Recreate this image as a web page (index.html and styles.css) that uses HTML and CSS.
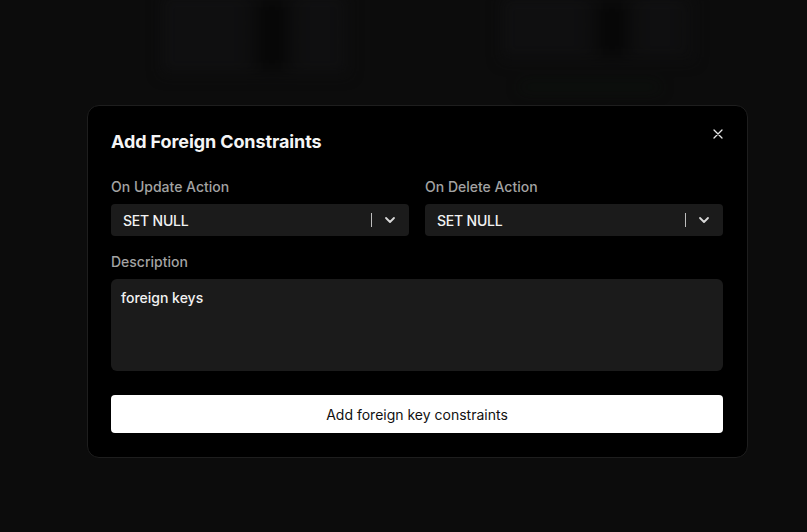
FILE: index.html
```html
<!DOCTYPE html>
<html>
<head>
<meta charset="utf-8">
<link rel="stylesheet" href="styles.css">
</head>
<body>
<div class="backdrop">
  <div class="ghost ghost-a">
    <div class="gcol"><div class="gline"></div><div class="gline"></div><div class="gline"></div><div class="gline"></div></div>
    <div class="gdark"></div>
    <div class="gcol narrow"><div class="gline"></div><div class="gline"></div><div class="gline"></div><div class="gline"></div></div>
  </div>
  <div class="ghost ghost-b">
    <div class="gcol"><div class="gline"></div><div class="gline"></div><div class="gline"></div></div>
    <div class="gdark"></div>
    <div class="gcol narrow"><div class="gline"></div><div class="gline"></div><div class="gline"></div></div>
    <div class="gbar"></div>
  </div>
</div>

<div class="modal">
  <button class="close" aria-label="Close">
    <svg width="12" height="12" viewBox="0 0 12 12"><path d="M2 2L10 10M10 2L2 10" stroke="#e6e6e6" stroke-width="1.3" stroke-linecap="round"/></svg>
  </button>
  <h2 class="title">Add Foreign Constraints</h2>
  <div class="row">
    <div class="field">
      <label class="label">On Update Action</label>
      <div class="select">
        <span class="value">SET NULL</span>
        <span class="sep"></span>
        <svg class="chev" width="14" height="14" viewBox="0 0 14 14"><path d="M3 5L7 9L11 5" fill="none" stroke="#d9d9d9" stroke-width="1.8" stroke-linecap="round" stroke-linejoin="round"/></svg>
      </div>
    </div>
    <div class="field">
      <label class="label">On Delete Action</label>
      <div class="select">
        <span class="value">SET NULL</span>
        <span class="sep"></span>
        <svg class="chev" width="14" height="14" viewBox="0 0 14 14"><path d="M3 5L7 9L11 5" fill="none" stroke="#d9d9d9" stroke-width="1.8" stroke-linecap="round" stroke-linejoin="round"/></svg>
      </div>
    </div>
  </div>
  <div class="field desc">
    <label class="label">Description</label>
    <div class="textarea">foreign keys</div>
  </div>
  <button class="submit">Add foreign key constraints</button>
</div>
</body>
</html>
```
FILE: styles.css
```css
* { box-sizing: border-box; }
html, body {
  margin: 0;
  height: 100%;
}
body {
  background: #0c0c0c;
  font-family: "Inter", "Liberation Sans", sans-serif;
  color: #ededed;
  overflow: hidden;
}
.backdrop {
  display: flex;
  gap: 150px;
  padding-left: 160px;
  filter: blur(7px);
  opacity: 0.6;
}
.ghost {
  display: flex;
  gap: 14px;
  width: 190px;
  height: 82px;
  margin-top: -6px;
  background: #0f0f10;
  padding: 6px 4px;
  position: relative;
}
.ghost-b { width: 195px; height: 66px; margin-top: -4px; }
.gcol { display: flex; flex-direction: column; gap: 8px; width: 80px; }
.gcol.narrow { width: 40px; }
.gline { height: 10px; background: #161618; border-radius: 3px; }
.gdark { width: 28px; background: #050505; }
.gbar {
  position: absolute;
  left: 20px;
  bottom: -30px;
  width: 140px;
  height: 10px;
  background: #0d140e;
}

.modal {
  position: absolute;
  left: 87px;
  top: 105px;
  width: 661px;
  height: 353px;
  background: #000;
  border: 1px solid #1e1e1e;
  border-radius: 12px;
  padding: 23px 24px 24px 23px;
}
.close {
  position: absolute;
  right: 21px;
  top: 20px;
  width: 16px;
  height: 16px;
  padding: 0;
  border: none;
  background: transparent;
  display: flex;
  align-items: center;
  justify-content: center;
}
.title {
  margin: 0;
  font-size: 18px;
  line-height: 26px;
  font-weight: 700;
  color: #f5f5f5;
  letter-spacing: -0.1px;
}
.row {
  display: grid;
  grid-template-columns: 1fr 1fr;
  gap: 16px;
  margin-top: 22px;
}
.field { display: flex; flex-direction: column; gap: 7px; }
.label {
  font-size: 14px;
  line-height: 20px;
  color: #a3a3a3;
  font-weight: 500;
}
.select {
  height: 32px;
  background: #1b1b1b;
  border-radius: 4px;
  display: flex;
  align-items: center;
  padding: 0 12px 0 12px;
}
.value {
  flex: 1;
  font-size: 14px;
  font-weight: 500;
  color: #f2f2f2;
  letter-spacing: -0.2px;
}
.sep {
  width: 1px;
  height: 14px;
  background: #bdbdbd;
  margin-right: 11px;
}
.chev { display: block; }
.desc { margin-top: 16px; }
.textarea {
  height: 92px;
  background: #1b1b1b;
  border-radius: 6px;
  padding: 9px 10px;
  font-size: 14px;
  line-height: 20px;
  color: #f2f2f2;
  font-weight: 500;
}
.submit {
  display: block;
  width: 100%;
  margin-top: 24px;
  height: 38px;
  border: none;
  border-radius: 4px;
  background: #fff;
  color: #111;
  font-family: inherit;
  font-size: 14px;
  font-weight: 400;
}
```
